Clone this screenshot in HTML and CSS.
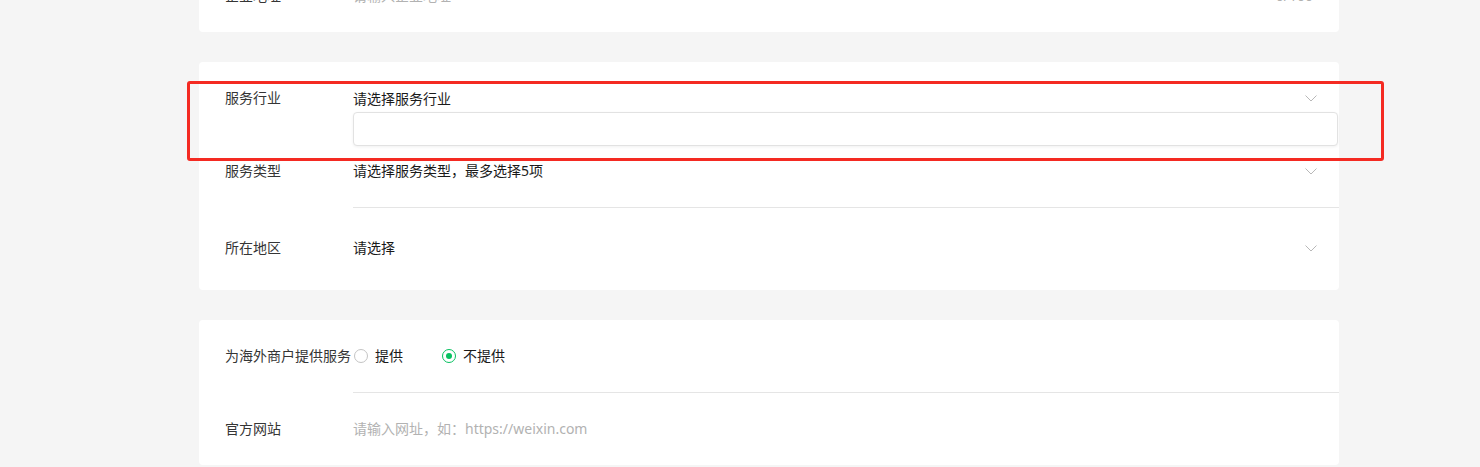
FILE: index.html
```html
<!DOCTYPE html>
<html lang="zh-CN">
<head>
<meta charset="utf-8">
<title>服务商资料</title>
<link rel="stylesheet" href="styles.css">
</head>
<body>
<div class="page">
  <section class="card card-first">
    <div class="row">
      <div class="label">企业地址</div>
      <div class="value value-last">
        <span class="placeholder">请输入企业地址</span>
        <span class="counter">0/100</span>
      </div>
    </div>
  </section>

  <section class="card card-select">
    <div class="row">
      <div class="label">服务行业</div>
      <div class="value value-open">
        <span class="text">请选择服务行业</span>
        <svg class="chev" width="12" height="7" viewBox="0 0 12 7"><path d="M0.5 0.5 L6 6 L11.5 0.5" fill="none" stroke="#b8b8b8" stroke-width="1"/></svg>
        <div class="dropdown"></div>
      </div>
    </div>
    <div class="row">
      <div class="label">服务类型</div>
      <div class="value">
        <span class="text">请选择服务类型，最多选择5项</span>
        <svg class="chev" width="12" height="7" viewBox="0 0 12 7"><path d="M0.5 0.5 L6 6 L11.5 0.5" fill="none" stroke="#b8b8b8" stroke-width="1"/></svg>
      </div>
    </div>
    <div class="row row-tall">
      <div class="label">所在地区</div>
      <div class="value value-last">
        <span class="text">请选择</span>
        <svg class="chev" width="12" height="7" viewBox="0 0 12 7"><path d="M0.5 0.5 L6 6 L11.5 0.5" fill="none" stroke="#b8b8b8" stroke-width="1"/></svg>
      </div>
    </div>
    <div class="highlight"></div>
  </section>

  <section class="card">
    <div class="row">
      <div class="label">为海外商户提供服务</div>
      <div class="value radios">
        <label class="radio"><span class="dot"></span><span>提供</span></label>
        <label class="radio radio-on"><span class="dot"></span><span>不提供</span></label>
      </div>
    </div>
    <div class="row">
      <div class="label">官方网站</div>
      <div class="value value-last">
        <span class="placeholder">请输入网址，如：https://weixin.com</span>
      </div>
    </div>
  </section>
</div>
</body>
</html>
```

FILE: styles.css
```css
* { box-sizing: border-box; }
html, body {
  margin: 0;
  padding: 0;
  background: #f5f5f5;
  height: 467px;
  overflow: hidden;
}
body {
  font-family: "Noto Sans", "Noto Sans CJK SC", sans-serif;
  font-size: 14px;
  line-height: 22px;
  color: #1a1a1a;
}
.page {
  margin-left: 199px;
  width: 1140px;
  display: flex;
  flex-direction: column;
  gap: 30px;
  margin-top: -40px;
}
.card {
  background: #fff;
  border-radius: 4px;
  padding-left: 26px;
  position: relative;
}
.row {
  display: flex;
}
.label {
  width: 128px;
  flex: none;
  padding: 25px 0;
  color: #353535;
  white-space: nowrap;
}
.value {
  flex: 1;
  display: flex;
  align-items: center;
  justify-content: space-between;
  padding: 25px 22px 25px 0;
  border-bottom: 1px solid #e5e5e5;
  position: relative;
  min-height: 73px;
}
.value-last { border-bottom: none; min-height: 72px; }
.value-open { border-bottom: none; }
.row-tall .label { padding-top: 29px; }
.row-tall .value { padding-top: 29px; padding-bottom: 30px; min-height: 82px; align-items: flex-start; }
.row-tall .chev { margin-top: 8px; }
.card-first .value { padding-right: 26px; }
.placeholder { color: #b2b2b2; }
.counter { color: #b2b2b2; }
.text { color: #1a1a1a; }
.chev { display: block; flex: none; }
.dropdown {
  position: absolute;
  left: 0;
  right: 1px;
  top: 50px;
  height: 34px;
  background: #fff;
  border: 1px solid #e2e2e2;
  border-radius: 4px;
  box-shadow: 0 1px 3px rgba(0, 0, 0, 0.06);
  z-index: 2;
}
.highlight {
  position: absolute;
  left: -12px;
  top: 19px;
  width: 1197px;
  height: 80px;
  border: 3px solid #f42a22;
  border-radius: 3px;
  z-index: 3;
  pointer-events: none;
}
.radios {
  justify-content: flex-start;
  gap: 38px;
}
.radio {
  display: flex;
  align-items: center;
  gap: 7px;
  color: #1a1a1a;
}
.radio .dot {
  width: 14px;
  height: 14px;
  border-radius: 50%;
  border: 1px solid #c4c4c4;
  display: flex;
  align-items: center;
  justify-content: center;
  margin-left: 1px;
}
.radio-on .dot { border-color: #07c160; }
.radio-on .dot::after {
  content: "";
  width: 6px;
  height: 6px;
  border-radius: 50%;
  background: #07c160;
}
```
